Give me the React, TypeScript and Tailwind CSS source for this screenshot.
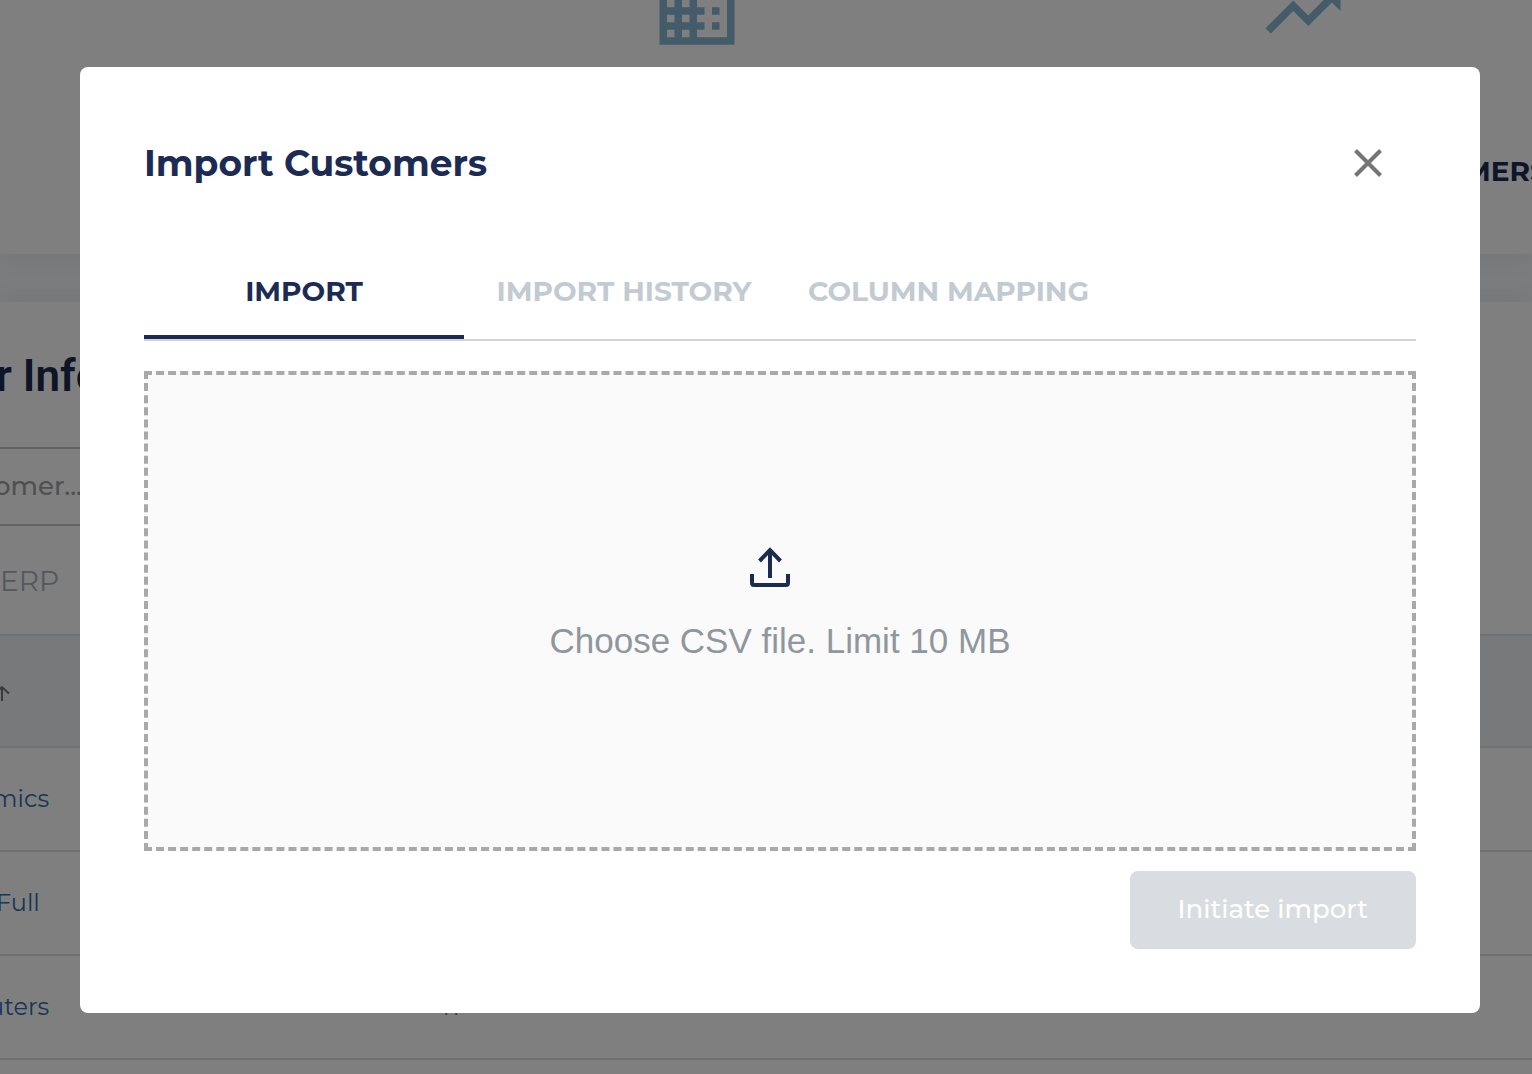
import React from "react";
import { MdBusiness, MdTrendingUp } from "react-icons/md";

const customers = [
  { name: "mics", erp: "", indent: "-ml-2" },
  { name: "Full", erp: "", indent: "-ml-1" },
  { name: "uters", erp: "n", indent: "-ml-3" },
];

const tabs = [
  { label: "IMPORT", active: true },
  { label: "IMPORT HISTORY", active: false },
  { label: "COLUMN MAPPING", active: false },
];

function UploadIcon() {
  return (
    <svg
      viewBox="0 0 40 40"
      className="mr-5 h-10 w-10"
      fill="none"
      stroke="#1c2b53"
      strokeWidth="4"
      aria-hidden="true"
    >
      <path d="M20 31V4" />
      <path d="M9.5 14L20 3.2L30.5 14" />
      <path d="M2 27v9a2 2 0 0 0 2 2h32a2 2 0 0 0 2-2v-9" />
    </svg>
  );
}

function CloseIcon() {
  return (
    <svg
      viewBox="0 0 28 28"
      className="h-7 w-7"
      fill="none"
      stroke="#757575"
      strokeWidth="4"
      aria-hidden="true"
    >
      <path d="M1.5 1.5l25 25M26.5 1.5l-25 25" />
    </svg>
  );
}

function SortArrow() {
  return (
    <svg
      viewBox="0 0 16 16"
      className="mt-1 -ml-1.5 h-4 w-4"
      fill="none"
      stroke="#757575"
      strokeWidth="2"
      aria-hidden="true"
    >
      <path d="M8 16V2M1 8.5L8 2l7 6.5" />
    </svg>
  );
}

function CustomersPage() {
  return (
    <div className="flex h-screen flex-col gap-12 overflow-hidden bg-[#f4f8fa]">
      <section className="flex h-[254px] shrink-0 overflow-hidden bg-white pl-[394px] shadow-[0_4px_24px_rgba(0,0,0,0.05)]">
        <div className="-mt-[34px] flex w-[606px] shrink-0 flex-col items-center">
          <MdBusiness className="h-[90px] w-[90px] text-[#88b6d4]" />
        </div>
        <div className="-mt-[34px] flex w-[606px] shrink-0 flex-col items-center">
          <MdTrendingUp className="h-[90px] w-[90px] text-[#88b6d4]" />
          <p className="mt-[95px] w-full pl-[464px] text-[28px] leading-10 font-bold text-[#1c2b53]">
            MERS
          </p>
        </div>
      </section>

      <section className="flex-1 bg-white shadow-[0_-4px_24px_rgba(0,0,0,0.05)]">
        <div className="flex h-[332px] w-[600px] flex-col pt-[50px]">
          <h2 className="-ml-1 font-['Roboto',sans-serif] text-[44px] leading-[48px] font-semibold text-[#1c2b53]">
            r Info
          </h2>
          <input
            type="text"
            aria-label="Search customers"
            placeholder="omer..."
            className="mt-[47px] -ml-1.5 h-[79px] border-y-2 border-[#c4c4c4] pb-0.5 text-[26px] font-medium placeholder:text-[#a0a0a0]"
          />
          <p className="mt-[35px] text-[28px] leading-10 text-[#a8b0ba]">ERP</p>
        </div>
        <table className="w-full table-fixed border-t-2 border-[#e0e3e7] text-left text-2xl">
          <thead>
            <tr className="h-28 border-b-2 border-[#e0e3e7] bg-[#f0f3f6]">
              <th className="w-[443px]">
                <SortArrow />
              </th>
              <th />
            </tr>
          </thead>
          <tbody>
            {customers.map((row) => (
              <tr key={row.name} className="h-[104px] border-b-2 border-[#e0e0e0]">
                <td>
                  <a href="#" className={`block text-[#2f6fae] ${row.indent}`}>
                    {row.name}
                  </a>
                </td>
                <td className="text-[#757575]">{row.erp}</td>
              </tr>
            ))}
          </tbody>
        </table>
      </section>
    </div>
  );
}

function ImportDialog() {
  return (
    <div className="fixed inset-0 flex items-start bg-black/50 pt-[67px] pr-[52px] pl-20">
      <div
        role="dialog"
        aria-modal="true"
        aria-labelledby="dialog-title"
        className="flex-1 rounded-lg bg-white p-16"
      >
        <header className="flex items-center justify-between pr-4">
          <h1 id="dialog-title" className="text-[36px] leading-[48px] font-bold text-[#1c2b53]">
            Import Customers
          </h1>
          <button type="button" aria-label="Close" className="flex h-16 w-16 items-center justify-center">
            <CloseIcon />
          </button>
        </header>

        <div role="tablist" className="mt-12 flex border-b-2 border-[#d3d3d3]">
          {tabs.map((tab) => (
            <button
              key={tab.label}
              type="button"
              role="tab"
              aria-selected={tab.active}
              className={
                tab.active
                  ? "h-24 min-w-80 border-b-4 border-[#1c2b53] px-6 pt-1 text-[28px] font-bold text-[#1c2b53]"
                  : "h-24 min-w-80 border-b-4 border-transparent px-6 pt-1 text-[28px] font-bold text-[#c3cbd2]"
              }
            >
              {tab.label}
            </button>
          ))}
        </div>

        <button
          type="button"
          className="mt-[30px] flex h-[480px] w-full flex-col items-center justify-center gap-[30px] border-4 border-dashed border-[#a9a9a9] bg-[#fafafa] pb-2.5"
        >
          <UploadIcon />
          <span className="font-['Liberation_Sans',sans-serif] text-[35px] leading-[48px] text-[#8f969d]">
            Choose CSV file. Limit 10 MB
          </span>
        </button>

        <div className="mt-5 flex justify-end">
          <button
            type="button"
            disabled
            className="h-[78px] rounded-lg bg-[#d9dce1] px-12 pb-0.5 text-[26px] font-medium text-white"
          >
            Initiate import
          </button>
        </div>
      </div>
    </div>
  );
}

export default function App() {
  return (
    <main className="font-['Montserrat','Inter',sans-serif]">
      <CustomersPage />
      <ImportDialog />
    </main>
  );
}
